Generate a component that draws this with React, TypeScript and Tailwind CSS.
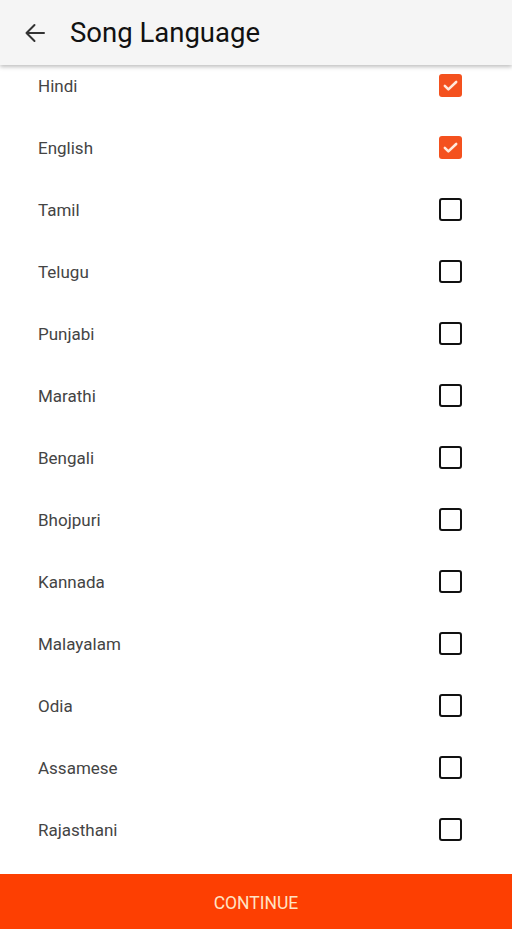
import React, { useState } from 'react'

const LANGS = ['Hindi', 'English', 'Tamil', 'Telugu', 'Punjabi', 'Marathi', 'Bengali', 'Bhojpuri', 'Kannada', 'Malayalam', 'Odia', 'Assamese', 'Rajasthani']

function Check({ on }: { on: boolean }) {
  if (on) {
    return (
      <div className="flex h-[23px] w-[23px] items-center justify-center rounded-[3px] bg-[#f4511e]">
        <svg width="17" height="17" viewBox="0 0 24 24" fill="none" stroke="#ffe9dc" strokeWidth="3.6" strokeLinecap="round" strokeLinejoin="round">
          <path d="M4 12.5l5 5L20 7" />
        </svg>
      </div>
    )
  }
  return <div className="h-[23px] w-[23px] rounded-[3px] border-[2.5px] border-[#111]" />
}

export default function App() {
  const [picked, setPicked] = useState<string[]>(['Hindi', 'English'])
  const toggle = (l: string) => setPicked((p) => (p.includes(l) ? p.filter((x) => x !== l) : [...p, l]))

  return (
    <div className="flex h-[929px] w-[512px] flex-col bg-white" style={{ fontFamily: 'Roboto, "Noto Sans", sans-serif' }}>
      <div className="relative z-10 flex h-[65px] shrink-0 items-center bg-[#f5f5f5] shadow-[0_2px_4px_rgba(0,0,0,0.25)]">
        <svg className="ml-[23px]" width="24" height="24" viewBox="0 0 24 24" fill="none" stroke="#333" strokeWidth="2" strokeLinecap="round" strokeLinejoin="round">
          <path d="M21 12H3.5M11.5 4l-8 8 8 8" />
        </svg>
        <h1 className="ml-[23px] text-[27.5px] text-[#111]">Song Language</h1>
      </div>
      <div className="flex-1 overflow-hidden">
        <div className="-mt-[11px]">
          {LANGS.map((l) => (
            <div key={l} onClick={() => toggle(l)} className="flex h-[62px] items-center justify-between pl-[38px] pr-[50px]">
              <span className="pt-[3px] text-[17px] text-[#444]">{l}</span>
              <Check on={picked.includes(l)} />
            </div>
          ))}
        </div>
      </div>
      <button type="button" className="h-[55px] w-full shrink-0 pt-[3px] bg-[#fd3f02] text-[17.5px] text-[#ffe3c4]">
        CONTINUE
      </button>
    </div>
  )
}
